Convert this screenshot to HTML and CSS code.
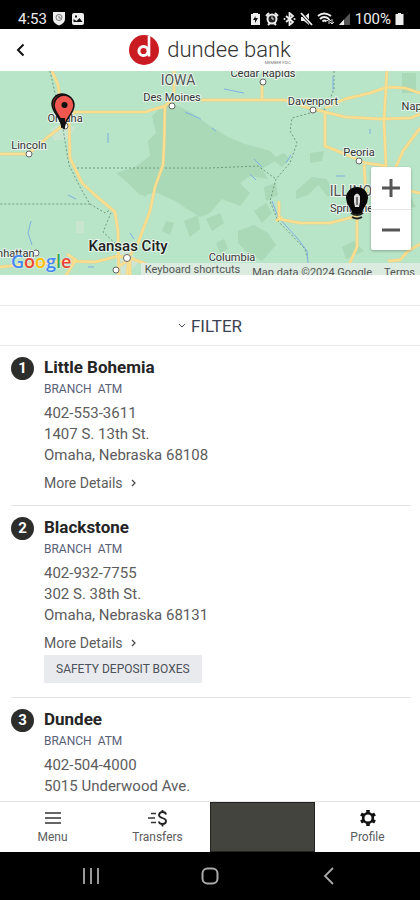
FILE: index.html
```html
<!DOCTYPE html>
<html lang="en">
<head>
<meta charset="utf-8">
<meta name="viewport" content="width=device-width, initial-scale=1">
<title>Locations - dundee bank</title>
<link rel="stylesheet" href="styles.css">
</head>
<body>
<div class="status">
  <div class="status-group">
    <span>4:53</span>
    <svg width="14" height="15" viewBox="0 0 14 15"><path d="M1 1h12v7q0 4-6 6.500Q1 12 1 8z" fill="#eee"/><circle cx="7" cy="6.500" r="3" fill="none" stroke="#777"/><path d="M7 5v2h2" fill="none" stroke="#777"/></svg>
    <svg width="14" height="14" viewBox="0 0 14 14"><rect x="1" y="1" width="12" height="12" rx="2" fill="#eee"/><path d="M2.500 10V7l3 2 3-3 3 4zM4 3.500h2v2H4z" fill="#111"/></svg>
  </div>
  <div class="status-group status-right">
    <svg width="11" height="14" viewBox="0 0 11 14"><path d="M3 1h5v1h2v11H1V2h2z" fill="#eee"/><path d="M5.500 4 3 8h2v3l3-5H5.500z" fill="#111"/></svg>
    <svg width="14" height="14" viewBox="0 0 14 14"><path d="M1 4 4 1M13 4l-3-3M3 13l2-2M11 13l-2-2" stroke="#eee" stroke-width="2"/><circle cx="7" cy="7" r="4.500" fill="#222" stroke="#eee" stroke-width="2"/><path d="M7 4.500V7h2" fill="none" stroke="#eee"/></svg>
    <svg width="13" height="14" viewBox="0 0 13 14"><path d="m3 4 7 6-3.500 3V1L10 4l-7 6" fill="none" stroke="#eee" stroke-width="1.800"/><circle cx="1.500" cy="7" r="1" fill="#eee"/><circle cx="11.500" cy="7" r="1" fill="#eee"/></svg>
    <svg width="13" height="14" viewBox="0 0 13 14"><path d="M1 5h3l5-4v12L4 9H1z" fill="#eee"/><path d="m1 1 11 12" stroke="#000" stroke-width="3"/><path d="m1 1 11 12" stroke="#eee" stroke-width="1.800"/></svg>
    <svg width="17" height="14" viewBox="0 0 17 14"><path d="M1 4q6-5 13 0M3 7q4-4 9 0M5.500 9.500q2-2 4 0" fill="none" stroke="#eee" stroke-width="2"/><path d="M12 12V7m-2 2 2-2 2 2M15 7v5m-2-2 2 2 2-2" fill="none" stroke="#ddd"/></svg>
    <svg width="13" height="14" viewBox="0 0 13 14"><path d="M12 1v12H1z" fill="#555"/><path d="M6 7.500V13H1z" fill="#eee"/></svg>
    <span>100%</span>
    <svg width="9" height="14" viewBox="0 0 9 14"><path d="M3 1h3v1h2.500v11H.5V2H3z" fill="#eee"/></svg>
  </div>
</div>

<header class="header">
  <button class="back" aria-label="Back"><svg width="10" height="14" viewBox="0 0 10 14"><path d="M7.500 1.500 2 7l5.500 5.500" fill="none" stroke="#111" stroke-width="2"/></svg></button>
  <div class="brand">
    <svg width="30" height="30" viewBox="0 0 30 30"><circle cx="15" cy="15" r="15" fill="#cb1b22"/><circle cx="14.500" cy="16" r="4.600" fill="none" stroke="#fff" stroke-width="3"/><path d="M20 1v20.500" stroke="#fff" stroke-width="2.600"/></svg>
    <div class="brand-text"><span class="brand-name">dundee bank</span><small class="brand-note">MEMBER FDIC</small></div>
  </div>
</header>

<section class="map" aria-label="Map of branches">
  <svg class="map-art" viewBox="0 0 420 204" preserveAspectRatio="xMidYMid slice">
    <rect width="420" height="204" fill="#b8e4c7"/>
    <g fill="#a9d9b7">
      <path d="M165 33l13 2 14 7 18 13 18 11 17 7 25 7 8 8-16 10 6 10-18-3-10 7 10 10-10 13-18-7-12 14-10 4-25-16-17-8-18 2-12-12-12-10 19-6 15-11-2-15 8-8-4-17z"/>
      <path d="m272 88 12-6 6 6-8 8zM184 150l14-6 2 14-10 8zM166 150l8 2-4 12-8-4zM206 148l14-6 4 10-12 8zM254 140l12-8 6 10-10 10zM238 160l16-6 14 8 8 12-14 16-14-8-10-10zM216 172l8-4 4 10-8 4zM296 120l16-14 8 6-12 12-12 4zM312 106l14 2 10 14-8 4zM310 82l14-2-2 10-12 2zM402 2h14v20h-14zM342 176l12-6 10 10-18 8zM396 128l14-4 6 12-16 4zM264 116l12-4 2 12-12 6zM140 114l10-4 2 10-8 6z"/>
    </g>
    <g fill="#cde6d3"><path d="m50 58 12-6 14 4-8 12-14 2zM76 150h8v12h-8z" opacity=".7"/><path d="m116 182 14-4 8 14-12 12h-10z"/></g>
    <g class="border">
      <path d="m50 0 5 22 7 30 7 42 12 24 9 15H0M90 133l15 9 8-5-10 24 15 14M73 97h137l48-2 18 13M334 0v18l-8 20-16 4-18 5-2 13 7 12-7 20-14 16-6 22 8 20 27 28 3 12"/>
    </g>
    <g class="water"><path d="M108 62v10M185 41l16 7M68 124l8 4M31 150l-3 12 4 12M130 162l4 6M254 88l8 8M250 103l6 6M286 92l5-8M272 130l6 16 20 22 9 12 1 12M333 5v14M336 105h9M370 58v5M224 18l20 4M212 57l4 3M88 196h6"/></g>
    <g class="road-edge"><path d="m52 0 6 14 3 20 8 14 1 39 12 25 13 12 20 17 3 19 1 44M0 83h28l20-17 18-14 9-11h70l20-6 7-6h113l24 8 36 9 36 2 30-1 9-4M165 35l-1 40-1 19-8 22-5 24-12 32-9 14-2 18M174 0v29M262 14v16M325 41v34l25 10 15 7 22 3M325 37l20-9 25-6 17-6 18 1 15 5M387 0l-3 50 2 45M420 57l-17 23-8 18M364 94l2 30-9 21v31l-8 18M279 130v18l21 4h30l27-7M276 150l6-4M0 196l20-2 48-4 27 1 23-6 12 2 40 15M66 204l10-15-9-6M130 188v16M118 196l12-8M420 173l-12 7-8 9-12 1M410 120l10 2"/></g>
    <g class="road"><path d="m52 0 6 14 3 20 8 14 1 39 12 25 13 12 20 17 3 19 1 44M0 83h28l20-17 18-14 9-11h70l20-6 7-6h113l24 8 36 9 36 2 30-1 9-4M165 35l-1 40-1 19-8 22-5 24-12 32-9 14-2 18M174 0v29M262 14v16M325 41v34l25 10 15 7 22 3M325 37l20-9 25-6 17-6 18 1 15 5M387 0l-3 50 2 45M420 57l-17 23-8 18M364 94l2 30-9 21v31l-8 18M279 130v18l21 4h30l27-7M276 150l6-4M0 196l20-2 48-4 27 1 23-6 12 2 40 15M66 204l10-15-9-6M130 188v16M118 196l12-8M420 173l-12 7-8 9-12 1M410 120l10 2"/></g>
    <g class="town"><circle cx="172" cy="35" r="3"/><circle cx="29" cy="83" r="3"/><circle cx="263" cy="11" r="3"/><circle cx="313" cy="39" r="3"/><circle cx="359" cy="90" r="3"/><circle cx="127" cy="187" r="3.500"/><circle cx="116" cy="199" r="3"/><circle cx="36" cy="182" r="3"/><circle cx="65" cy="55" r="3"/></g>
    <g class="label">
      <text class="state" x="178" y="14">IOWA</text>
      <text class="state" x="357" y="125">ILLINOIS</text>
      <text x="172" y="30">Des Moines</text>
      <text x="263" y="6">Cedar Rapids</text>
      <text x="313" y="34">Davenport</text>
      <text x="426" y="39">Naperville</text>
      <text x="65" y="51">Omaha</text>
      <text x="29" y="78">Lincoln</text>
      <text x="359" y="85">Peoria</text>
      <text x="356" y="141">Springfield</text>
      <text x="232" y="190">Columbia</text>
      <text x="8" y="186">Manhattan</text>
      <text class="city" x="128" y="180">Kansas City</text>
    </g>
    <g stroke="#111" stroke-width="1.500"><path d="M62 57C62 47 52 42 52 33a10 10 0 0 1 20 0c0 9-10 14-10 24z" fill="#b7332c"/><path d="M64 58c0-10-10-15-10-24a10 10 0 0 1 20 0c0 9-10 14-10 24z" fill="#f0584f"/></g>
    <circle cx="64.500" cy="34" r="3" fill="#111"/><path d="M60 47h5v9h-3z" fill="#111"/>
    <path d="M353 142c0-6-6-7-6-15a10 10 0 0 1 20 0c0 8-6 9-6 15z" fill="#080808" stroke="#080808" stroke-width="2"/><path d="M354 131v-6q3-5 6 0v6l-1 5h-4z" fill="#ddd"/><path d="M357 126v8" stroke="#111"/><path d="M351 142q6 4 12 0M352 146q5 3 10 0" stroke="#222" stroke-width="2" fill="none"/>
  </svg>
  <div class="google" aria-label="Google"><span class="g-blue">G</span><span class="g-red">o</span><span class="g-yellow">o</span><span class="g-blue">g</span><span class="g-green">l</span><span class="g-red">e</span></div>
  <div class="map-credit"><button>Keyboard shortcuts</button><span>Map data ©2024 Google</span><a href="#terms">Terms</a></div>
  <div class="zoom">
    <button aria-label="Zoom in"><svg width="18" height="18" viewBox="0 0 18 18"><path d="M9 0v18M0 9h18" stroke="#555" stroke-width="3"/></svg></button>
    <button aria-label="Zoom out"><svg width="18" height="18" viewBox="0 0 18 18"><path d="M0 9h18" stroke="#555" stroke-width="3"/></svg></button>
  </div>
</section>

<button class="filter"><svg width="8" height="6" viewBox="0 0 8 6"><path d="m1 1 3 3 3-3" fill="none" stroke="#445" stroke-width="1"/></svg>FILTER</button>

<main class="list">
  <article class="branch">
    <span class="number">1</span>
    <div class="details">
      <h2>Little Bohemia</h2>
      <p class="tags"><span>BRANCH</span><span>ATM</span></p>
      <p class="address">402-553-3611<br>1407 S. 13th St.<br>Omaha, Nebraska 68108</p>
      <a class="more" href="#little-bohemia">More Details <svg width="6" height="8" viewBox="0 0 6 8"><path d="m1 1 3 3-3 3" fill="none" stroke="#444" stroke-width="1.200"/></svg></a>
    </div>
  </article>
  <article class="branch">
    <span class="number">2</span>
    <div class="details">
      <h2>Blackstone</h2>
      <p class="tags"><span>BRANCH</span><span>ATM</span></p>
      <p class="address">402-932-7755<br>302 S. 38th St.<br>Omaha, Nebraska 68131</p>
      <a class="more" href="#blackstone">More Details <svg width="6" height="8" viewBox="0 0 6 8"><path d="m1 1 3 3-3 3" fill="none" stroke="#444" stroke-width="1.200"/></svg></a>
      <p class="chip">SAFETY DEPOSIT BOXES</p>
    </div>
  </article>
  <article class="branch">
    <span class="number">3</span>
    <div class="details">
      <h2>Dundee</h2>
      <p class="tags"><span>BRANCH</span><span>ATM</span></p>
      <p class="address">402-504-4000<br>5015 Underwood Ave.<br>Omaha, Nebraska 68132</p>
    </div>
  </article>
</main>

<nav class="tabs">
  <a href="#menu"><svg width="16" height="18" viewBox="0 0 16 18"><path d="M0 4h16M0 9h16M0 14h16" stroke="#333" stroke-width="1.500"/></svg>Menu</a>
  <a href="#transfers"><svg width="20" height="18" viewBox="0 0 20 18"><path d="M3 4.500h5M0 9h7M3 13.500h5" stroke="#333" stroke-width="1.500"/><path d="M18 5.500q-.5-2.500-3.500-2.500T11 6q0 2 3.500 3t3.500 3q0 3-3.500 3T11 12.500M14.500 1v2M14.500 15v2.500" fill="none" stroke="#222" stroke-width="1.800"/></svg>Transfers</a>
  <a class="active" href="#locations" aria-label="Locations"></a>
  <a href="#profile"><svg width="18" height="18" viewBox="0 0 18 18"><circle cx="9" cy="9" r="4.800" fill="none" stroke="#111" stroke-width="2.600"/><path d="M9 1v3M9 14v3M2 5l2.600 1.500M13.400 11.500 16 13M2 13l2.600-1.500M13.400 6.500 16 5" stroke="#111" stroke-width="3.500"/></svg>Profile</a>
</nav>

<div class="system">
  <button aria-label="Recent apps"><svg width="18" height="18" viewBox="0 0 18 18"><path d="M2 1v16M9 1v16M16 1v16" stroke="#aaa" stroke-width="1.800"/></svg></button>
  <button aria-label="Home"><svg width="18" height="18" viewBox="0 0 18 18"><rect x="1.500" y="1.500" width="15" height="15" rx="5" fill="none" stroke="#aaa" stroke-width="2"/></svg></button>
  <button aria-label="System back"><svg width="18" height="18" viewBox="0 0 18 18"><path d="M13 1 5 9l8 8" fill="none" stroke="#aaa" stroke-width="1.800"/></svg></button>
</div>
</body>
</html>
```
FILE: styles.css
```css
* { box-sizing: border-box; }
body {
  margin: 0;
  height: 100vh;
  display: flex;
  flex-direction: column;
  background: #fff;
  color: #5c5c5c;
  font-family: Roboto, "Liberation Sans", sans-serif;
}
button { border: 0; padding: 0; background: none; font: inherit; color: inherit; }
a { color: inherit; text-decoration: none; }
h2, p { margin: 0; }

.status {
  flex: none;
  display: flex;
  justify-content: space-between;
  align-items: center;
  padding: 8px 16px 0 18px;
  height: 29px;
  background: #000;
  color: #eee;
  font-size: 15px;
  line-height: 20px;
}
.status-group { display: flex; align-items: center; gap: 5px; }
.status-right { gap: 4px; }

.header {
  flex: none;
  display: grid;
  grid-template-columns: 40px 1fr 40px;
  height: 42px;
  align-items: center;
}
.back { height: 40px; display: flex; align-items: center; padding-left: 16px; }
.brand { display: flex; justify-content: center; align-items: center; gap: 8px; }
.brand-text { display: flex; flex-direction: column; padding-top: 3px; }
.brand-name {
  font-weight: 300;
  font-size: 22px;
  line-height: 22px;
  color: #333;
}
.brand-note { font-size: 4px; line-height: 4px; text-align: right; color: #777; }

.map { flex: none; position: relative; height: 204px; overflow: hidden; }
.map-art { display: block; width: 100%; height: 100%; }
.border { fill: none; stroke: #6f9a82; stroke-width: 1; stroke-dasharray: 2 2; }
.water { fill: none; stroke: #7fb0e4; stroke-width: 1; }
.road-edge { fill: none; stroke: #ecd28a; stroke-width: 3; stroke-linejoin: round; }
.road { fill: none; stroke: #fbdf90; stroke-width: 2; stroke-linejoin: round; }
.town { fill: #fff; stroke: #666; stroke-width: 1; }
.label {
  font-size: 11px;
  fill: #333;
  stroke: #e8f5ec;
  stroke-width: 2;
  paint-order: stroke;
  text-anchor: middle;
}
.state { font-size: 14px; fill: #555; }
.city { font-size: 15px; font-weight: 500; fill: #222; }
.google {
  position: absolute;
  left: 11px;
  bottom: 3px;
  font-family: "Open Sans", sans-serif;
  font-weight: 600;
  font-size: 18px;
  line-height: 22px;
  text-shadow: 0 0 2px #fff;
}
.g-blue { color: #4285f4; }
.g-red { color: #ea4335; }
.g-yellow { color: #fbbc05; }
.g-green { color: #34a853; }
.map-credit {
  position: absolute;
  right: 0;
  bottom: 0;
  display: flex;
  gap: 12px;
  padding: 0 5px 0 4px;
  height: 12px;
  background: #dcebe0;
  font-size: 11px;
  line-height: 13px;
  color: #555;
  white-space: nowrap;
  overflow: hidden;
}
.map-credit span, .map-credit a { padding-top: 3px; }
.map-credit button { line-height: 13px; }
.zoom {
  position: absolute;
  right: 9px;
  top: 96px;
  display: flex;
  flex-direction: column;
  width: 40px;
  background: #fff;
  border-radius: 2px;
  box-shadow: 0 1px 3px #0004;
}
.zoom button { display: grid; place-items: center; height: 42px; }
.zoom button + button { height: 41px; border-top: 1px solid #e6e6e6; }

.filter {
  flex: none;
  display: flex;
  justify-content: center;
  align-items: center;
  gap: 5px;
  margin-top: 30px;
  height: 41px;
  border-top: 1px solid #eaeaea;
  border-bottom: 1px solid #eaeaea;
  font-size: 17px;
  color: #3c4252;
}

.list { flex: 1; min-height: 0; overflow: hidden; padding: 0 9px 0 11px; }
.branch { display: flex; gap: 10px; padding: 10px 0 12px; border-bottom: 1px solid #e4e4e4; }
.number {
  flex: none;
  width: 23px;
  height: 23px;
  margin-top: 1px;
  border-radius: 50%;
  background: #2d2d2b;
  color: #fff;
  text-align: center;
  font-weight: 700;
  font-size: 15px;
  line-height: 23px;
}
.details { flex: 1; }
.details h2 { margin-bottom: 1px; font-size: 17px; line-height: 22px; font-weight: 700; color: #252525; }
.tags { display: flex; gap: 6px; font-size: 12px; line-height: 20px; color: #59607a; }
.address { margin-top: 4px; font-size: 15px; line-height: 21px; }
.more { display: flex; align-items: center; gap: 8px; margin-top: 7px; font-size: 14px; line-height: 20px; }
.chip {
  width: fit-content;
  margin: 2px 0;
  padding: 0 12px;
  background: #e8eaee;
  border-radius: 1px;
  font-size: 12px;
  line-height: 28px;
  color: #4c5059;
}

.tabs {
  flex: none;
  display: grid;
  grid-template-columns: repeat(4, 1fr);
  height: 51px;
  border-top: 1px solid #e4e4e4;
  font-size: 12px;
  line-height: 16px;
}
.tabs a { display: flex; flex-direction: column; align-items: center; gap: 2px; padding-top: 7px; }
.tabs .active { background: #43443d; border: 1px solid #222; }

.system {
  flex: none;
  display: flex;
  justify-content: space-around;
  align-items: center;
  height: 48px;
  padding: 0 32px;
  background: #000;
}
.system button { display: grid; place-items: center; }
```
